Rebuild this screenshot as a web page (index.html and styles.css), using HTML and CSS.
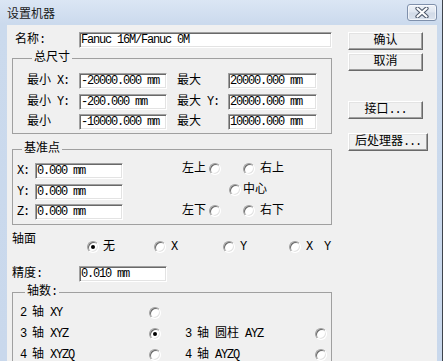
FILE: index.html
```html
<!DOCTYPE html>
<html lang="zh-CN">
<head>
<meta charset="utf-8">
<title>设置机器</title>
<link rel="stylesheet" href="styles.css">
</head>
<body>
<div class="window">
  <div class="titlebar">
    <span class="title">设置机器</span>
    <div class="close">
      <svg width="18" height="11" viewBox="0 0 18 11">
        <path d="M4.5 1.5 L13.5 9.5 M13.5 1.5 L4.5 9.5" stroke="#4b5668" stroke-width="4.2" stroke-linecap="round" fill="none"/>
        <path d="M4.5 1.5 L13.5 9.5 M13.5 1.5 L4.5 9.5" stroke="#ffffff" stroke-width="2.2" stroke-linecap="round" fill="none"/>
      </svg>
    </div>
  </div>
  <div class="client">
    <div class="main">
      <div class="name-row">
        <span class="lbl-name">名称<span class="l">:</span></span>
        <div class="field wide"><span class="l">Fanuc 16M/Fanuc 0M</span></div>
      </div>

      <fieldset class="group dims">
        <legend>总尺寸</legend>
        <div class="dims-grid">
          <span class="lbl">最小<span class="l"> X:</span></span>
          <div class="field f88"><span class="l">-20000.000 mm</span></div>
          <span class="lbl max">最大</span>
          <div class="field f89"><span class="l">20000.000 mm</span></div>

          <span class="lbl">最小<span class="l"> Y:</span></span>
          <div class="field f88"><span class="l">-200.000 mm</span></div>
          <span class="lbl max">最大<span class="l"> Y:</span></span>
          <div class="field f89"><span class="l">20000.000 mm</span></div>

          <span class="lbl">最小</span>
          <div class="field f88"><span class="l">-10000.000 mm</span></div>
          <span class="lbl max">最大</span>
          <div class="field f89"><span class="l">10000.000 mm</span></div>
        </div>
      </fieldset>

      <fieldset class="group refpt">
        <legend>基准点</legend>
        <div class="ref-body">
          <div class="ref-left">
            <span class="lbl"><span class="l">X:</span></span>
            <div class="field f88"><span class="l">0.000 mm</span></div>
            <span class="lbl"><span class="l">Y:</span></span>
            <div class="field f88"><span class="l">0.000 mm</span></div>
            <span class="lbl"><span class="l">Z:</span></span>
            <div class="field f88"><span class="l">0.000 mm</span></div>
          </div>
          <div class="ref-right">
            <div class="opt tl"><span>左上</span><span class="radio"></span></div>
            <div class="opt tr"><span class="radio"></span><span>右上</span></div>
            <div class="opt mid"><span class="radio"></span><span>中心</span></div>
            <div class="opt bl"><span>左下</span><span class="radio"></span></div>
            <div class="opt br"><span class="radio"></span><span>右下</span></div>
          </div>
        </div>
      </fieldset>

      <div class="axis-row">
        <span class="axis-lbl">轴面</span>
        <div class="axis-opts">
          <div class="opt"><span class="radio on"></span><span class="t-cn">无</span></div>
          <div class="opt"><span class="radio"></span><span class="t-l l">X</span></div>
          <div class="opt"><span class="radio"></span><span class="t-l l">Y</span></div>
          <div class="opt"><span class="radio"></span><span class="t-l l">X  Y</span></div>
        </div>
      </div>

      <div class="prec-row">
        <span class="lbl-name prec">精度<span class="l">:</span></span>
        <div class="field f88"><span class="l">0.010 mm</span></div>
      </div>

      <fieldset class="group axes">
        <legend>轴数<span class="l">:</span></legend>
        <div class="axes-grid">
          <span class="c1"><span class="l">2 </span>轴<span class="l"> XY</span></span>
          <span class="radio c2"></span>

          <span class="c1"><span class="l">3 </span>轴<span class="l"> XYZ</span></span>
          <span class="radio on c2"></span>
          <span class="c3"><span class="l">3 </span>轴<span class="l"> </span>圆柱<span class="l"> AYZ</span></span>
          <span class="radio c4"></span>

          <span class="c1"><span class="l">4 </span>轴<span class="l"> XYZQ</span></span>
          <span class="radio c2"></span>
          <span class="c3"><span class="l">4 </span>轴<span class="l"> AYZQ</span></span>
          <span class="radio c4"></span>
        </div>
      </fieldset>
    </div>

    <div class="side">
      <div class="btn">确认</div>
      <div class="btn b2">取消</div>
      <div class="btn b3">接口<span class="l">...</span></div>
      <div class="btn b4 wide-btn">后处理器<span class="l">...</span></div>
    </div>
  </div>
</div>
</body>
</html>
```

FILE: styles.css
```css
* {
  box-sizing: border-box;
}

html, body {
  margin: 0;
  padding: 0;
}

body {
  background: #cbd9eb;
  font-family: "Liberation Mono", "Noto Sans CJK SC", monospace;
  font-size: 12px;
  line-height: 14px;
  color: #000;
}

.l {
  font-family: "Liberation Mono", monospace;
  letter-spacing: -1.2px;
  white-space: pre;
}

.window {
  width: 443px;
  height: 361px;
  overflow: hidden;
  display: flex;
  flex-direction: column;
  background: linear-gradient(#dbe6f4 0px, #cbdaed 24px, #c9d8ec 100%);
  border-right: 1px solid #3f444c;
}

.titlebar {
  height: 25px;
  flex: none;
  display: flex;
  align-items: flex-start;
  padding-left: 7px;
}

.title {
  margin-top: 6px;
  font-family: "Noto Sans CJK SC", sans-serif;
  font-size: 12px;
  line-height: 14px;
  color: #1a1a1a;
}

.close {
  margin-left: auto;
  margin-right: 5px;
  margin-top: 4px;
  width: 30px;
  height: 17px;
  border: 1px solid #7f90ab;
  border-radius: 3px;
  background: linear-gradient(#eef2f8 0%, #dfe6f0 48%, #d1dae7 52%, #dbe3ee 100%);
  box-shadow: inset 0 0 0 1px rgba(255, 255, 255, 0.6);
  display: flex;
  align-items: center;
  justify-content: center;
}

.client {
  flex: 1;
  margin-left: 7px;
  margin-right: 5px;
  background: #f0f0f0;
  display: flex;
  padding-left: 5px;
}

.main {
  width: 320px;
  flex: none;
}

/* fields */
.field {
  height: 16px;
  background: #fff;
  border: 1px solid;
  border-color: #a0a0a0 #ffffff #ffffff #a0a0a0;
  box-shadow: inset 1px 1px 0 #696969, inset -1px -1px 0 #e3e3e3;
  padding-left: 1px;
  display: flex;
  align-items: center;
  white-space: nowrap;
  overflow: hidden;
}

.wide { width: 253px; }
.f88 { width: 88px; }
.f89 { width: 89px; }

.name-row {
  margin-top: 7px;
  display: flex;
  align-items: center;
  height: 16px;
}

.lbl-name {
  width: 67px;
  padding-left: 3px;
  flex: none;
}

/* group boxes */
.group {
  margin: 0;
  border: 1px solid #a0a0a0;
  min-width: 0;
}

.group legend {
  padding: 0 2px;
  margin-left: 5px;
  line-height: 14px;
}

.dims {
  margin-top: 3px;
  padding: 8px 0 3px 14px;
}

.dims-grid {
  display: grid;
  grid-template-columns: 52px 88px 61px 89px;
  grid-auto-rows: 16px;
  row-gap: 4.5px;
  align-items: center;
}

.lbl {
  white-space: nowrap;
}

.max {
  padding-left: 10px;
}

.refpt {
  margin-top: 8px;
  padding: 7px 0 4px 4px;
}

.ref-body {
  display: flex;
}

.ref-left {
  display: grid;
  grid-template-columns: 18px 88px;
  grid-auto-rows: 16px;
  row-gap: 4.5px;
  align-items: center;
}

.ref-right {
  margin-left: 59px;
  margin-top: -2px;
  display: grid;
  grid-template-columns: 47px 14px auto;
  grid-template-rows: 16px 16px 16px;
  row-gap: 5px;
  align-items: center;
}

.opt {
  display: flex;
  align-items: center;
  white-space: nowrap;
}

.tl { grid-column: 1; grid-row: 1; gap: 3px; }
.tr { grid-column: 3; grid-row: 1; gap: 5px; }
.mid { grid-column: 2 / 4; grid-row: 2; gap: 2px; }
.bl { grid-column: 1; grid-row: 3; gap: 3px; }
.br { grid-column: 3; grid-row: 3; gap: 5px; }

/* radio */
.radio {
  flex: none;
  width: 12px;
  height: 12px;
  border-radius: 50%;
  background: #fff;
  border: 1px solid;
  border-color: #a0a0a0 #ffffff #ffffff #a0a0a0;
  box-shadow: inset 1px 1px 0 #696969, inset -1px -1px 0 #e3e3e3;
  position: relative;
}

.radio.on::after {
  content: "";
  position: absolute;
  left: 3px;
  top: 3px;
  width: 4px;
  height: 4px;
  border-radius: 50%;
  background: #000;
}

/* axis plane */
.axis-row {
  margin-top: 8px;
  display: flex;
  align-items: flex-start;
}

.axis-lbl {
  width: 75px;
  flex: none;
}

.axis-opts {
  margin-top: 7px;
  display: grid;
  grid-template-columns: 67px 69px 66px auto;
}

.t-cn { margin-left: 4px; }
.t-l { margin-left: 5px; }

.prec-row {
  margin-top: 12px;
  display: flex;
  align-items: center;
}

.prec {
  padding-left: 0;
}

.axes {
  margin-top: 3px;
  padding: 7px 0 4px 7px;
}

.axes-grid {
  display: grid;
  grid-template-columns: 129px 12px 24px 130px 12px;
  grid-auto-rows: 14px;
  row-gap: 7px;
  align-items: center;
  white-space: nowrap;
}

.c1 { grid-column: 1; }
.c2 { grid-column: 2; }
.c3 { grid-column: 4; }
.c4 { grid-column: 5; }

/* buttons */
.side {
  margin-left: 16px;
  padding-top: 7px;
  display: flex;
  flex-direction: column;
  align-items: flex-start;
}

.btn {
  width: 75px;
  height: 18px;
  background: #f0f0f0;
  border: 1px solid;
  border-color: #ffffff #696969 #696969 #ffffff;
  box-shadow: inset -1px -1px 0 #a0a0a0, inset 1px 1px 0 #e3e3e3;
  display: flex;
  align-items: center;
  justify-content: center;
  white-space: nowrap;
}

.b2 { margin-top: 3px; }
.b3 { margin-top: 30px; }
.b4 { margin-top: 14px; }
.wide-btn { width: 80px; }
```
